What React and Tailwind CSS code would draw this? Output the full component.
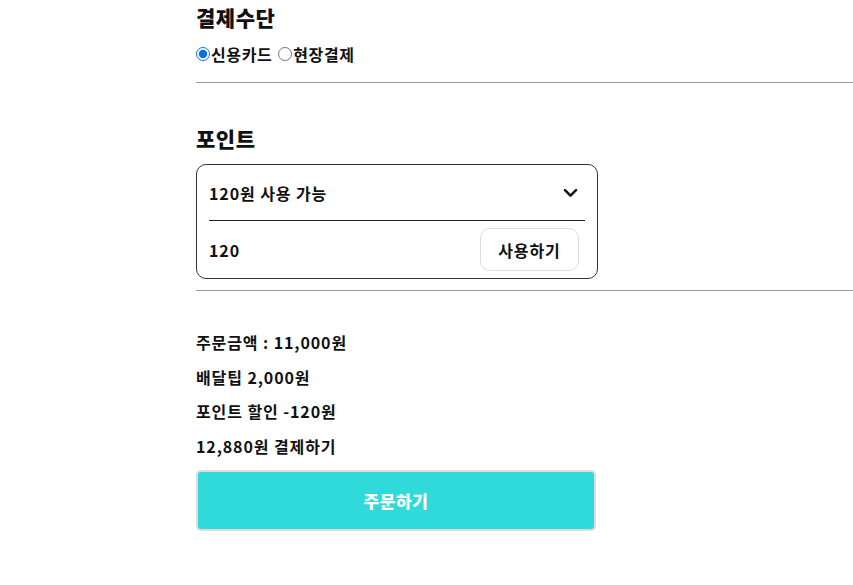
import React, { useState } from 'react';

const font = { fontFamily: '"Noto Sans CJK KR", "Noto Sans", sans-serif' };

export default function App() {
  const [pay, setPay] = useState('card');
  const [point, setPoint] = useState('120');

  return (
    <div className="min-h-[585px] bg-white text-[#111]" style={font}>
      <div className="pl-[196px]">
        <h2 className="text-[21px] font-black leading-[34px] tracking-[0.5px]">결제수단</h2>
        <div className="flex items-center h-[40px] text-[16px] font-bold tracking-[0.6px]">
          <label className="flex items-center">
            <input type="radio" name="pay" checked={pay === 'card'} onChange={() => setPay('card')}
              className="w-[14px] h-[14px] m-0 mr-[1px] accent-[#0b6ef0]" />
            신용카드
          </label>
          <label className="flex items-center ml-[6px]">
            <input type="radio" name="pay" checked={pay === 'site'} onChange={() => setPay('site')}
              className="w-[14px] h-[14px] m-0 mr-[1px]" />
            현장결제
          </label>
        </div>
        <div className="mt-[8px] border-t border-[#9a9a9a]" />

        <h2 className="mt-[38px] text-[21px] font-black leading-[34px] tracking-[0.5px]">포인트</h2>
        <div className="mt-[9px] w-[402px] border border-[#333] rounded-[10px] px-[12px]">
          <div className="flex items-center justify-between h-[56px] border-b border-[#222] text-[16px] font-bold tracking-[0.9px]">
            <span>120원 사용 가능</span>
            <svg width="19" height="19" viewBox="0 0 24 24" fill="none" stroke="#111" strokeWidth="3.2" strokeLinecap="round" strokeLinejoin="round" className="mr-[5px]">
              <path d="M5 9l7 7 7-7" />
            </svg>
          </div>
          <div className="flex items-center justify-between h-[57px]">
            <input value={point} onChange={e => setPoint(e.target.value)}
              className="w-[200px] text-[16px] font-bold tracking-[0.9px] outline-none bg-transparent" style={font} />
            <button className="mr-[6px] w-[99px] h-[43px] border border-[#ddd] rounded-[10px] bg-white text-[16px] font-bold tracking-[0.9px]" style={font}>
              사용하기
            </button>
          </div>
        </div>
        <div className="mt-[11px] border-t border-[#9a9a9a]" />

        <div className="mt-[34px] flex flex-col text-[16px] font-bold tracking-[0.9px]">
          <p className="leading-[35px]">주문금액 : 11,000원</p>
          <p className="leading-[34px]">배달팁 2,000원</p>
          <p className="leading-[35px]">포인트 할인 -120원</p>
          <p className="leading-[35px]">12,880원 결제하기</p>
        </div>
        <button className="mt-[6px] w-[400px] h-[61px] rounded-[5px] border-2 border-[#dcdcdc] bg-[#30dada] text-white text-[17px] font-black tracking-[0.6px]" style={font}>
          주문하기
        </button>
      </div>
    </div>
  );
}
